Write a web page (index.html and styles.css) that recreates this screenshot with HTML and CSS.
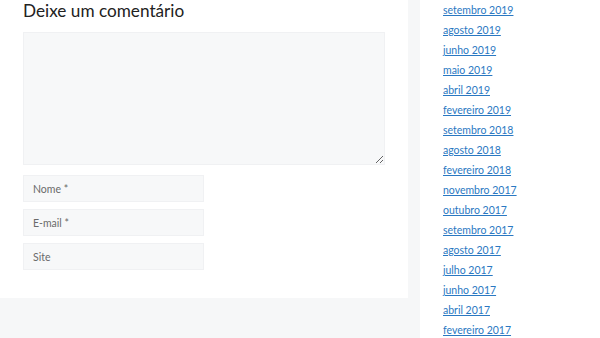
FILE: index.html
```html
<!DOCTYPE html>
<html lang="pt-BR">
<head>
<meta charset="utf-8">
<title>Deixe um comentário</title>
<link rel="stylesheet" href="styles.css">
</head>
<body>
<div class="page">
  <main class="content">
    <h3 class="reply-title">Deixe um comentário</h3>
    <form class="comment-form">
      <textarea class="comment-text" aria-label="Comentário"></textarea>
      <input class="field" type="text" placeholder="Nome *">
      <input class="field" type="email" placeholder="E-mail *">
      <input class="field" type="url" placeholder="Site">
    </form>
  </main>
  <aside class="sidebar">
    <ul class="archive">
      <li><a href="#">setembro 2019</a></li>
      <li><a href="#">agosto 2019</a></li>
      <li><a href="#">junho 2019</a></li>
      <li><a href="#">maio 2019</a></li>
      <li><a href="#">abril 2019</a></li>
      <li><a href="#">fevereiro 2019</a></li>
      <li><a href="#">setembro 2018</a></li>
      <li><a href="#">agosto 2018</a></li>
      <li><a href="#">fevereiro 2018</a></li>
      <li><a href="#">novembro 2017</a></li>
      <li><a href="#">outubro 2017</a></li>
      <li><a href="#">setembro 2017</a></li>
      <li><a href="#">agosto 2017</a></li>
      <li><a href="#">julho 2017</a></li>
      <li><a href="#">junho 2017</a></li>
      <li><a href="#">abril 2017</a></li>
      <li><a href="#">fevereiro 2017</a></li>
    </ul>
  </aside>
</div>
</body>
</html>
```
FILE: styles.css
```css
html, body {
  margin: 0;
  padding: 0;
  height: 100%;
  overflow: hidden;
}
body {
  background: #f6f7f8;
  font-family: "Lato", "Open Sans", sans-serif;
  color: #3a3a3a;
}
.page {
  display: flex;
  align-items: flex-start;
  gap: 12px;
}
.content {
  width: 408px;
  height: 298px;
  box-sizing: border-box;
  background: #ffffff;
  padding: 0 23px;
}
.reply-title {
  margin: 0;
  padding-top: 0;
  font-size: 17.2px;
  font-weight: 400;
  line-height: 21px;
  color: #222222;
}
.comment-form {
  display: flex;
  flex-direction: column;
  align-items: flex-start;
  margin-top: 11px;
}
.comment-text {
  width: 362px;
  height: 133px;
  box-sizing: border-box;
  background: #f7f8f9;
  border: 1px solid #f0f1f3;
  border-radius: 0;
  margin: 0 0 10px 0;
  resize: vertical;
}
.field {
  width: 181px;
  height: 27px;
  box-sizing: border-box;
  background: #f7f8f9;
  border: 1px solid #f0f1f3;
  border-radius: 0;
  padding: 0 9px;
  margin: 0 0 7px 0;
  font-family: "Lato", "Open Sans", sans-serif;
  font-size: 10.5px;
  color: #555;
}
.field::placeholder {
  color: #6a6a6a;
}
.sidebar {
  width: 180px;
  height: 338px;
  box-sizing: border-box;
  background: #ffffff;
  padding-left: 23px;
}
.archive {
  list-style: none;
  margin: 0;
  padding: 0;
}
.archive li {
  height: 20px;
  line-height: 20px;
  font-size: 10.5px;
}
.archive a {
  color: #2a78c2;
  text-decoration: underline;
}
```
